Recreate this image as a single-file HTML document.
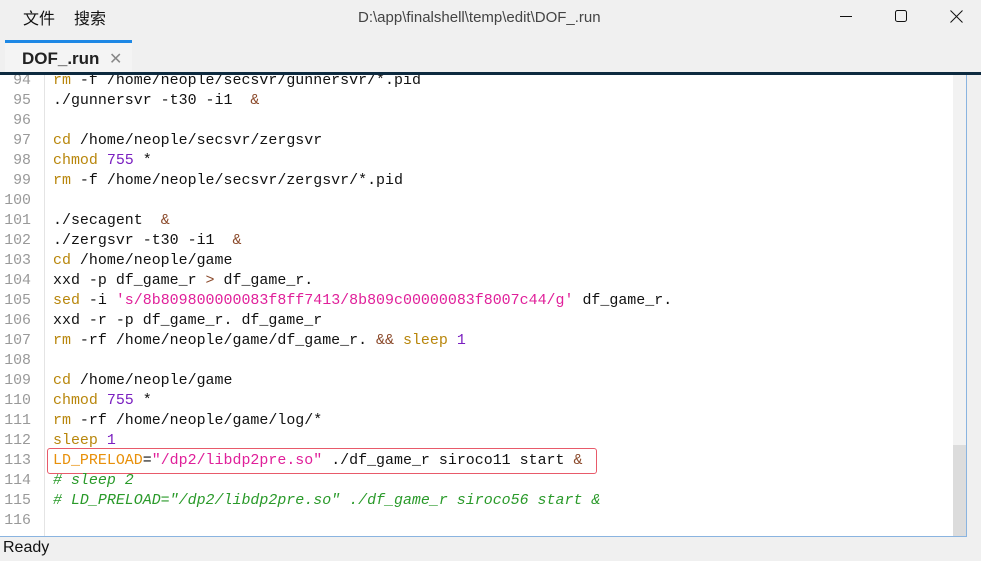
<!DOCTYPE html>
<html><head><meta charset="utf-8"><style>
body{margin:0;width:981px;height:561px;background:#f0f0f0;position:relative;overflow:hidden;font-family:"Liberation Sans","Noto Sans CJK SC",sans-serif}
.menu{position:absolute;top:5px;font-size:16px;color:#111}
.title{position:absolute;left:358px;top:9px;font-size:15px;color:#444}
.tab{position:absolute;left:5px;top:40px;width:127px;height:33px;background:#f4f4f4;border-top:3px solid #1e88e5;box-sizing:border-box}
.tab span{position:absolute;left:17px;top:6px;font-size:17px;font-weight:bold;color:#222}
.tab i{position:absolute;left:104px;top:6px;font-style:normal;color:#888;font-size:16px}
.bar{position:absolute;left:0;top:72px;width:981px;height:3px;background:#0d2a3f}
.ed{position:absolute;left:0;top:75px;width:966px;height:461px;background:#fff;border-right:1px solid #8ab4e0;border-bottom:1px solid #8ab4e0;overflow:hidden}
.gut{position:absolute;left:0;top:0;width:44px;height:100%;border-right:1px solid #e4e4e4}
.ln{position:absolute;left:0;width:31px;text-align:right;font:14.9px "Liberation Mono",monospace;color:#999;line-height:20px}
.cd{position:absolute;left:53px;font:14.96px "Liberation Mono",monospace;color:#111;line-height:20px;white-space:pre}
.k{color:#b8860b}.n{color:#7a1fc0}.s{color:#e0209a}.o{color:#8b4a2b}.c{color:#2a9a2a;font-style:italic}.v{color:#e8900a}
.sb{position:absolute;left:953px;top:0;width:13px;height:100%;background:#f2f2f2}
.th{position:absolute;left:953px;top:370px;width:13px;height:91px;background:#dcdcdc}
.box{position:absolute;left:47px;top:373px;width:548px;height:24px;border:1px solid #e85a6a;border-radius:3px}
</style></head><body>
<div class="menu" style="left:23px">文件</div><div class="menu" style="left:74px">搜索</div>
<div class="title">D:\app\finalshell\temp\edit\DOF_.run</div>
<svg style="position:absolute;left:830px;top:6px" width="150" height="20" viewBox="0 0 150 20"><path d="M10 10.5h12" stroke="#111" stroke-width="1"/><rect x="65.5" y="4.5" width="11" height="11" rx="2" fill="none" stroke="#111"/><path d="M120.5 4.5l12 12M132.5 4.5l-12 12" stroke="#111"/></svg>
<div class="tab"><span>DOF_.run</span><i>✕</i></div>
<div class="bar"></div>
<div class="ed">
<div class="gut"></div>
<div class="sb"></div><div class="th"></div>
<div class="box"></div>
<div id="g"></div>
</div>
<div style="position:absolute;left:3px;top:539px;font-size:16px;color:#111">Ready</div>
<script>
var L=[
[94,'<span class="k">rm</span> -f /home/neople/secsvr/gunnersvr/*.pid'],
[95,'./gunnersvr -t30 -i1  <span class="o">&amp;</span>'],
[96,''],
[97,'<span class="k">cd</span> /home/neople/secsvr/zergsvr'],
[98,'<span class="k">chmod</span> <span class="n">755</span> *'],
[99,'<span class="k">rm</span> -f /home/neople/secsvr/zergsvr/*.pid'],
[100,''],
[101,'./secagent  <span class="o">&amp;</span>'],
[102,'./zergsvr -t30 -i1  <span class="o">&amp;</span>'],
[103,'<span class="k">cd</span> /home/neople/game'],
[104,'xxd -p df_game_r <span class="o">&gt;</span> df_game_r.'],
[105,'<span class="k">sed</span> -i <span class="s">\'s/8b809800000083f8ff7413/8b809c00000083f8007c44/g\'</span> df_game_r.'],
[106,'xxd -r -p df_game_r. df_game_r'],
[107,'<span class="k">rm</span> -rf /home/neople/game/df_game_r. <span class="o">&amp;&amp;</span> <span class="k">sleep</span> <span class="n">1</span>'],
[108,''],
[109,'<span class="k">cd</span> /home/neople/game'],
[110,'<span class="k">chmod</span> <span class="n">755</span> *'],
[111,'<span class="k">rm</span> -rf /home/neople/game/log/*'],
[112,'<span class="k">sleep</span> <span class="n">1</span>'],
[113,'<span class="v">LD_PRELOAD</span>=<span class="s">"/dp2/libdp2pre.so"</span> ./df_game_r siroco11 start <span class="o">&amp;</span>'],
[114,'<span class="c"># sleep 2</span>'],
[115,'<span class="c"># LD_PRELOAD="/dp2/libdp2pre.so" ./df_game_r siroco56 start &amp;</span>'],
[116,'']];
var h='';L.forEach(function(l){var t=(l[0]-95)*20+16;h+='<div class="ln" style="top:'+t+'px">'+l[0]+'</div><div class="cd" style="top:'+t+'px">'+l[1]+'</div>';});
document.getElementById('g').innerHTML=h;
</script>
</body></html>
